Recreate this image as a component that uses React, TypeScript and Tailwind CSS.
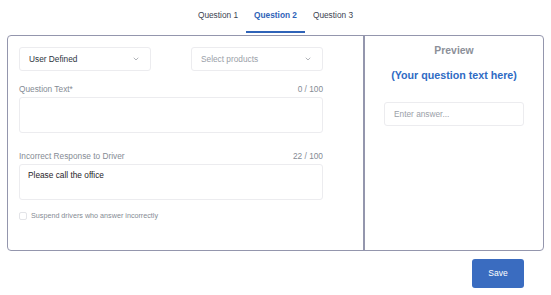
import { ChevronDown } from "lucide-react";

const tabs = ["Question 1", "Question 2", "Question 3"];

function Select({ value, placeholder }: { value?: string; placeholder?: string }) {
  return (
    <div className="w-[132px] h-[24px] border border-[#ececef] rounded-[3px] bg-white flex items-center justify-between pl-[9px] pr-[10px]">
      <span className={value ? "text-[8.3px] text-[#2d3540]" : "text-[8.3px] text-[#9aa0a8]"}>
        {value ?? placeholder}
      </span>
      <ChevronDown size={8} strokeWidth={1.8} className="text-[#7d838c]" />
    </div>
  );
}

function Field({ label, count, value }: { label: string; count: string; value?: string }) {
  return (
    <div className="flex flex-col">
      <div className="flex justify-between items-center h-[10px] text-[8.3px] text-[#858b94]">
        <span>{label}</span>
        <span>{count}</span>
      </div>
      <div className="mt-[3px] h-[36px] border border-[#ececef] rounded-[3px] bg-white px-[8px] pt-[4px] text-[8.3px] text-[#1f2329]">
        {value}
      </div>
    </div>
  );
}

export default function App() {
  return (
    <div className="w-[551px] h-[295px] bg-white font-['Liberation_Sans',Arial,sans-serif] overflow-hidden">
      <div className="flex justify-center">
        {tabs.map((t, i) => (
          <div
            key={t}
            className={
              i === 1
                ? "h-[33px] px-[8px] pt-[9px] border-b-2 border-[#2f63b8] text-[8.3px] font-bold text-[#2f63b8]"
                : "h-[33px] px-[8px] pt-[9px] border-b-2 border-transparent text-[8.3px] text-[#3b4350]"
            }
          >
            {t}
          </div>
        ))}
      </div>

      <div className="mx-[7px] mt-[2px] h-[216px] border border-[#9496ad] rounded-[4px] flex">
        <div className="w-[355px] pl-[11px] pr-[40px] pt-[11px] flex flex-col">
          <div className="flex justify-between">
            <Select value="User Defined" />
            <Select placeholder="Select products" />
          </div>
          <div className="mt-[13px]">
            <Field label="Question Text*" count="0 / 100" />
          </div>
          <div className="mt-[18px]">
            <Field label="Incorrect Response to Driver" count="22 / 100" value="Please call the office" />
          </div>
          <div className="mt-[11px] flex items-center gap-[4px]">
            <div className="w-[8px] h-[8px] border border-[#e3e4e8] rounded-[2px] bg-white" />
            <span className="text-[7.2px] text-[#858b94]">Suspend drivers who answer incorrectly</span>
          </div>
        </div>
        <div className="w-[2px] bg-[#9496ad]" />
        <div className="flex-1 flex flex-col items-center pt-[8px] px-[19px]">
          <div className="text-[10.4px] font-bold text-[#8c9099] leading-[13px]">Preview</div>
          <div className="mt-[12px] text-[10.7px] font-bold text-[#2f6bc4] leading-[13px]">
            (Your question text here)
          </div>
          <div className="mt-[20px] w-full h-[24px] border border-[#ececef] rounded-[3px] flex items-center pl-[9px] text-[8.3px] text-[#9aa0a8]">
            Enter answer...
          </div>
        </div>
      </div>

      <div className="flex justify-end pr-[27px] mt-[8px]">
        <button className="w-[52px] h-[29px] rounded-[3px] bg-[#3a6cc0] text-white text-[8.5px]">Save</button>
      </div>
    </div>
  );
}
